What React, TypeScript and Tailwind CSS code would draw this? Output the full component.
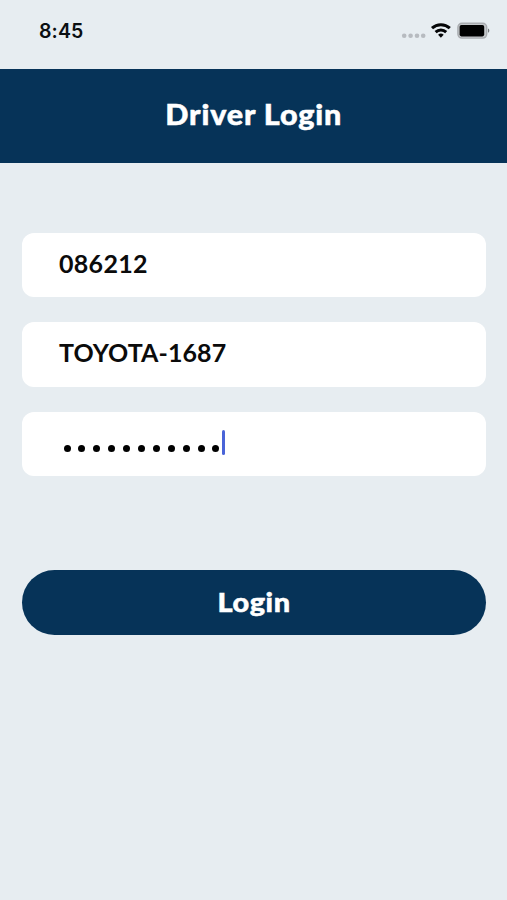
import type { ReactNode } from "react";

function StatusBar() {
  return (
    <div className="flex h-[69.3px] items-start justify-between pl-[39px] pr-[17px] pt-[20px]">
      <span className="font-['Inter',sans-serif] text-[19.5px] leading-[22px] font-semibold tracking-[0.1px] text-[#0b0f12]">
        8:45
      </span>
      <svg width="90" height="22" viewBox="0 0 90 22" className="block">
        <g fill="#b7bbc0">
          <circle cx="4.2" cy="15.8" r="2.3" />
          <circle cx="10.6" cy="15.8" r="2.3" />
          <circle cx="17" cy="15.8" r="2.3" />
          <circle cx="23.2" cy="15.8" r="2.3" />
        </g>
        <g fill="none" stroke="#050607" strokeWidth="3">
          <path d="M32 8.2a13 13 0 0 1 17.8 0" />
          <path d="M35.6 12.1a7.7 7.7 0 0 1 10.6 0" />
        </g>
        <path d="M40.9 17.7l-2.8-2.9a4.1 4.1 0 0 1 5.6 0z" fill="#050607" />
        <rect x="57.9" y="3.3" width="28.8" height="14.8" rx="4" fill="#c4c7ca" stroke="#a9acb0" strokeWidth="1.4" />
        <rect x="59.6" y="5" width="24.6" height="11.4" rx="1.8" fill="#000" />
        <path d="M88 8.6c1.8.6 1.8 3.6 0 4.2z" fill="#75787c" />
      </svg>
    </div>
  );
}

function Field({ children }: { children: ReactNode }) {
  return (
    <div className="flex h-[64.3px] items-start rounded-[12px] bg-white pl-[37px] text-[25px] leading-[30px] font-bold text-[#0b0b0b]">
      {children}
    </div>
  );
}

export default function App() {
  return (
    <div className="h-[900px] w-[507px] overflow-hidden bg-[#e7edf1] font-['Lato',sans-serif]">
      <StatusBar />
      <header className="flex h-[94.2px] items-start justify-center bg-[#063358] pt-[26.7px]">
        <h1 className="scale-x-[1.07] text-[28.5px] leading-[36px] font-black tracking-[0.8px] text-white [-webkit-text-stroke:0.5px_white]">
          Driver Login
        </h1>
      </header>
      <main className="flex flex-col gap-[25px] pt-[69.5px] pr-[21px] pl-[22px]">
        <Field>
          <span className="pt-[14.7px] tracking-[0.3px]">086212</span>
        </Field>
        <Field>
          <span className="pt-[14.5px] tracking-[0.1px]">TOYOTA-1687</span>
        </Field>
        <Field>
          <div className="flex gap-[7.9px] pt-[33px] pl-[4.5px]">
            {Array.from({ length: 11 }, (_, i) => (
              <span key={i} className="size-[7px] rounded-full bg-black" />
            ))}
          </div>
          <span className="mt-[18.4px] ml-[2.6px] h-[25px] w-[2.5px] rounded-full bg-[#4a64d8]" />
        </Field>
        <button className="mt-[69.5px] flex h-[64.3px] items-start justify-center rounded-full bg-[#063358] pt-[15px] text-[27px] leading-[34px] font-black text-white">
          <span className="inline-block scale-x-[1.07] tracking-[0.5px] [-webkit-text-stroke:0.5px_white]">Login</span>
        </button>
      </main>
    </div>
  );
}
